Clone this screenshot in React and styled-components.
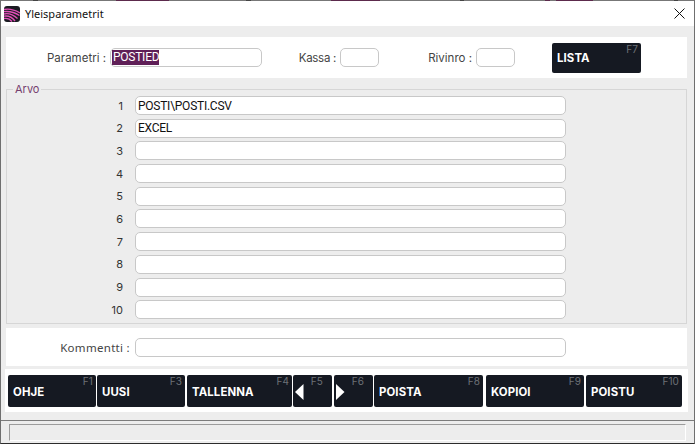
import React from "react";
import styled, { createGlobalStyle } from "styled-components";

const Global = createGlobalStyle`
  html, body { margin: 0; padding: 0; background: #ededed; }
  * { box-sizing: border-box; }
`;
const Window = styled.div`
  width: 695px; height: 444px; display: flex; flex-direction: column; overflow: hidden;
  background: #ededed;
  border-left: 1px solid #6f6f6f; border-right: 1px solid #6f6f6f;
  border-bottom: 1px solid #2c2c2c;
  font-family: "Noto Sans", sans-serif; color: #222;
`;
const TopEdge = styled.div`
  height: 1px; flex: none;
  background: linear-gradient(90deg, #777 0 32px, #444 32px 37px, #777 37px 115px, #5c2a4c 115px 168px, #777 168px 245px, #444 245px 250px, #777 250px 330px, #5c2a4c 330px 379px, #777 379px 459px, #444 459px 463px, #777 463px 544px, #5c2a4c 544px 549px, #777 549px 555px, #5c2a4c 555px 592px, #777 592px 673px, #444 673px 677px, #777 677px);
`;
const TitleBar = styled.div`
  height: 25px; flex: none; background: #fff; display: flex; align-items: center; padding: 0 9px 0 3px;
  font-size: 11px; color: #111; gap: 5px;
`;
const TitleText = styled.span` flex: 1; margin-top: -1px; `;
const Main = styled.div` padding: 11px 7px 0 5px; flex: none; `;
const ParamPanel = styled.div`
  height: 41px; background: #fff; display: flex; align-items: center; font-family: "Inter", sans-serif;
  font-size: 11px; color: #333;
`;
const FieldLabel = styled.label`
  width: ${p => p.$w}px; flex: none; text-align: right; padding-right: ${p => p.$pr || 4}px; color: #444; font-size: 11.5px;
  letter-spacing: ${p => p.$ls || 0}px;
`;
const Input = styled.div`
  width: ${p => p.$w ? p.$w + "px" : "431px"}; height: 19px; flex: none; background: #fff;
  border: 1px solid #c8c8c8; border-radius: 5px; padding: 0 2px;
  display: flex; align-items: center;
  font-family: "Roboto", sans-serif; font-size: 12px; letter-spacing: -.25px; color: #111; white-space: nowrap;
`;
const Selected = styled.span` background: #5f1f57; color: #fff; line-height: 15px; margin-left: -1px; padding-left: 1px; `;
const Group = styled.fieldset`
  margin: 8px 0 0 0; padding: 0; height: 238px; width: 681px;
  border: 1px solid #d6d6d6; position: relative; display: block;
`;
const Legend = styled.legend`
  margin-left: 6px; padding: 0 2px; font-family: "Inter", sans-serif; font-size: 11px; color: #75406f; line-height: 7px; height: 7px;
`;
const Rows = styled.div`
  display: grid; grid-template-columns: 116px 431px; column-gap: 12px; row-gap: 3.7px;
  grid-auto-rows: 19px; margin-top: 3px; align-items: center;
`;
const RowNum = styled.span`
  text-align: right; font-family: "Inter", sans-serif; font-size: 11px; color: #333;
`;
const CommentPanel = styled.div`
  margin-top: 4px; height: 38px; background: #fff; display: flex; align-items: center;
`;
const ButtonPanel = styled.div`
  margin: 3px -1px 0 -1px; height: 43px; background: #fff; display: flex; align-items: center; padding: 0 0 0 3px;
`;
const Btn = styled.button`
  position: relative; width: ${p => p.$w}px; margin-left: ${p => p.$ml || 0}px; height: ${p => p.$h || 32}px; flex: none; border: 0; border-radius: 2px;
  background: #151922; color: #fff; font-family: "Inter", sans-serif; font-weight: 700; font-size: 11.4px;
  text-align: left; padding: ${p => p.$h ? 0 : 2}px 0 0 ${p => p.$arrow ? 2 : 5}px; display: flex; align-items: center; letter-spacing: .1px;
`;
const Key = styled.span`
  position: absolute; top: 0; right: ${p => p.$r || 3}px; font-family: "Inter", sans-serif; font-weight: 400; font-size: 10px; color: #6d7177; line-height: 13px;
`;
const Rule = styled.div` margin-top: 8px; height: 1px; background: #7c7c7c; flex: none; `;
const StatusWrap = styled.div` padding: 3px 8px 0 8px; `;
const StatusBar = styled.div`
  height: 17px; border: 1px solid; border-color: #9c9c9c #fff #fff #9c9c9c; width: 677px;
`;
const Logo = () => (
  <svg width="16" height="16" viewBox="0 0 16 16">
    <rect x="0" y="0" width="16" height="16" rx="3" fill="#1b1b22" />
    <path d="M0 3.5C5 2.5 10 3.5 16 7M0 5.7C5 5 10 6 15.5 9.5M0 8C4 7 9 8.5 13.5 12.5M0 10.2C4 9.5 8 11 11 15M0 12.5C3 12 6 13 8 15.5" stroke="#e24fb8" strokeWidth="1.3" fill="none" />
  </svg>
);
const CloseIcon = () => (
  <svg width="11" height="11" viewBox="0 0 11 11"><path d="M.5.5l10 10M10.5.5l-10 10" stroke="#111" strokeWidth="1" fill="none" /></svg>
);
const Arrow = ({ right }) => (
  <svg width="9" height="16" viewBox="0 0 9 16"><path d={right ? "M0 0l8.5 8L0 16z" : "M8.5 0L0 8l8.5 8z"} fill="#fff" /></svg>
);

const values = ["POSTI\\POSTI.CSV", "EXCEL", "", "", "", "", "", "", "", ""];
const buttons = [
  { t: "OHJE", k: "F1", w: 88 }, { t: "UUSI", k: "F3", w: 88, ml: 1 }, { t: "TALLENNA", k: "F4", w: 105, ml: 2 },
  { a: "left", k: "F5", w: 39, ml: 1 }, { a: "right", k: "F6", w: 39, ml: 2 }, { t: "POISTA", k: "F8", w: 109, ml: 1 },
  { t: "KOPIOI", k: "F9", w: 98, ml: 3 }, { t: "POISTU", k: "F10", w: 96, ml: 2 },
];

export default function App() {
  return (
    <Window>
      <Global />
      <TopEdge />
      <TitleBar><Logo /><TitleText>Yleisparametrit</TitleText><CloseIcon /></TitleBar>
      <Main>
        <ParamPanel>
          <FieldLabel $w={104}>Parametri :</FieldLabel>
          <Input $w={152}><Selected>POSTIED</Selected></Input>
          <FieldLabel $w={78} $ls={-0.3}>Kassa :</FieldLabel>
          <Input $w={39} />
          <FieldLabel $w={97}>Rivinro :</FieldLabel>
          <Input $w={39} />
          <Btn $w={89} $ml={37} $h={30}>LISTA<Key>F7</Key></Btn>
        </ParamPanel>
        <Group>
          <Legend>Arvo</Legend>
          <Rows>
            {values.map((v, i) => (
              <React.Fragment key={i}>
                <RowNum>{i + 1}</RowNum>
                <Input>{v}</Input>
              </React.Fragment>
            ))}
          </Rows>
        </Group>
        <CommentPanel>
          <FieldLabel $w={129} $pr={5} $ls={0.3}>Kommentti :</FieldLabel>
          <Input />
        </CommentPanel>
        <ButtonPanel>
          {buttons.map((b) => (
            <Btn key={b.k} $w={b.w} $ml={b.ml} $arrow={!!b.a}>
              {b.t}{b.a && <Arrow right={b.a === "right"} />}<Key $r={b.a ? 9 : 3}>{b.k}</Key>
            </Btn>
          ))}
        </ButtonPanel>
      </Main>
      <Rule />
      <StatusWrap><StatusBar /></StatusWrap>
    </Window>
  );
}
